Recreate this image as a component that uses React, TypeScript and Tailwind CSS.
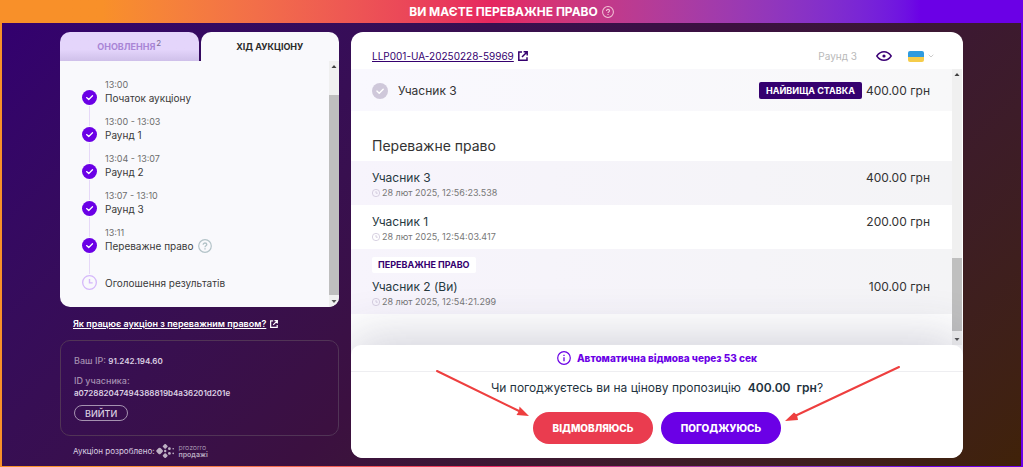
type Step = { time?: string; label: string; done: boolean; help?: boolean };
type Bid = { name: string; date: string; amount: string; own?: boolean };

const steps: Step[] = [
  { time: "13:00", label: "Початок аукціону", done: true },
  { time: "13:00 - 13:03", label: "Раунд 1", done: true },
  { time: "13:04 - 13:07", label: "Раунд 2", done: true },
  { time: "13:07 - 13:10", label: "Раунд 3", done: true },
  { time: "13:11", label: "Переважне право", done: true, help: true },
  { label: "Оголошення результатів", done: false },
];

const bids: Bid[] = [
  { name: "Учасник 3", date: "28 лют 2025, 12:56:23.538", amount: "400.00 грн" },
  { name: "Учасник 1", date: "28 лют 2025, 12:54:03.417", amount: "200.00 грн" },
  { name: "Учасник 2 (Ви)", date: "28 лют 2025, 12:54:21.299", amount: "100.00 грн", own: true },
];

const Check = ({ className }: { className: string }) => (
  <svg viewBox="0 0 16 16" className={className} aria-hidden="true">
    <circle cx="8" cy="8" r="8" fill="currentColor" />
    <path d="M4.9 8.1l2.3 2.1 4-4" fill="none" stroke="#fff" strokeWidth="1.4" strokeLinecap="round" strokeLinejoin="round" />
  </svg>
);

const Clock = ({ className }: { className: string }) => (
  <svg viewBox="0 0 16 16" className={className} fill="none" stroke="currentColor" aria-hidden="true">
    <circle cx="8" cy="8" r="7.3" strokeWidth="1.4" />
    <path d="M8 4.2v4.2h3.4" strokeWidth="1.5" />
  </svg>
);

const Help = ({ className }: { className: string }) => (
  <svg viewBox="0 0 14 14" className={className} fill="none" stroke="currentColor" aria-hidden="true">
    <circle cx="7" cy="7" r="6.3" strokeWidth="1.2" />
    <path d="M5.2 5.7c0-1 .8-1.7 1.8-1.7s1.8.7 1.8 1.6c0 1.2-1.8 1.3-1.8 2.6" strokeWidth="1.3" />
    <path d="M7 9.2v1.2" strokeWidth="1.4" />
  </svg>
);

const External = ({ className }: { className: string }) => (
  <svg viewBox="0 0 10 10" className={className} fill="none" stroke="currentColor" aria-hidden="true">
    <path d="M4 1H.8v8.2H9V6.2" strokeWidth="1.5" />
    <path d="M5.6.8h3.6v3.6M9 1L4 6" strokeWidth="1.5" />
  </svg>
);

const Scrollbar = ({ thumb }: { thumb: string }) => (
  <div className="flex w-[10px] shrink-0 flex-col items-center bg-[#f0f0f0]" aria-hidden="true">
    <svg viewBox="0 0 10 10" className="size-[10px] shrink-0">
      <path d="M5 4l2.5 3h-5z" fill="#404040" />
    </svg>
    <div className={`w-full bg-[#bfbfbf] ${thumb}`} />
    <svg viewBox="0 0 10 12" className="h-3 w-[10px] shrink-0">
      <path d="M5 8l2.5-3h-5z" fill="#555" />
    </svg>
  </div>
);

const Logo = () => (
  <svg viewBox="0 0 20 14" className="h-[14px] w-5" fill="#beb0c4" aria-hidden="true">
    <rect x=".9" y="4.3" width="5.4" height="5.4" rx="1.3" transform="rotate(45 3.6 7)" />
    <rect x="7.2" y=".4" width="4" height="4" rx="1" transform="rotate(45 9.2 2.4)" />
    <rect x="7.2" y="9.6" width="4" height="4" rx="1" transform="rotate(45 9.2 11.6)" />
    <circle cx="9.2" cy="7" r="1.2" />
    <circle cx="13.4" cy="4.7" r="1.4" />
    <circle cx="13.4" cy="9.4" r="1.4" />
    <circle cx="17.2" cy="4.7" r=".8" />
    <circle cx="17.2" cy="9.4" r=".8" />
  </svg>
);

const Sidebar = () => (
  <aside className="flex w-[279px] shrink-0 flex-col">
    <div className="flex gap-[2px]" role="tablist">
      <button
        role="tab"
        aria-selected="false"
        className="flex h-[29px] flex-1 items-center justify-center gap-px rounded-t-[10px] bg-linear-to-b from-[#e4d5fb] from-60% to-[#cfc0ea] text-[9px] font-bold text-[#a985d6]"
      >
        ОНОВЛЕННЯ
        <span className="pb-2 text-[8px] leading-[10px] font-normal text-[#7d6b98]">2</span>
      </button>
      <button
        role="tab"
        aria-selected="true"
        className="h-[29px] flex-1 rounded-t-[10px] bg-[#f9f9fc] text-[9px] font-bold text-[#2b2b2b]"
      >
        ХІД АУКЦІОНУ
      </button>
    </div>
    <div className="flex h-[246px] overflow-hidden rounded-b-[10px] bg-[#f9f9fc]">
      <ol className="flex-1 pt-[17px] pl-[22px]">
        {steps.map((step, i) => (
          <li key={step.label} className="flex h-[37px] gap-2">
            <div className="flex w-[15px] flex-col items-center pt-3">
              {step.done ? (
                <Check className="size-[15px] shrink-0 text-[#6b00e6]" />
              ) : (
                <Clock className="size-[15px] shrink-0 text-[#d5b8fa]" />
              )}
              {i < steps.length - 1 && <div className="mt-px -mb-[11px] w-px flex-1 bg-[#e6d8f8]" />}
            </div>
            <div>
              <div className="h-[13px] text-[9px] leading-[13px] text-[#6d6d6d]">{step.time}</div>
              <div className="flex h-[14px] items-center gap-1 text-[10px] leading-[14px] whitespace-nowrap text-[#3a3a3a]">
                {step.label}
                {step.help && <Help className="size-[14px] text-[#b3c3c8]" />}
              </div>
            </div>
          </li>
        ))}
      </ol>
      <Scrollbar thumb="mt-6 flex-1" />
    </div>
    <div className="flex h-[33px] items-center pl-[13px] text-[9px] font-semibold text-white">
      <a href="#how" className="flex items-center gap-1">
        <span className="underline">Як працює аукціон з переважним правом?</span>
        <External className="size-2" />
      </a>
    </div>
    <section className="h-[96px] rounded-[10px] border border-[#513456] px-[13px] pt-[13px] text-[9px] leading-[13px] font-medium text-[#dccfe2]">
      <p>
        <span className="text-[#a48eb0]">Ваш IP:</span> <span className="text-[8px] font-semibold">91.242.194.60</span>
      </p>
      <p className="mt-[6px] text-[#a48eb0]">ID учасника:</p>
      <p className="text-[8px] font-semibold">a072882047494388819b4a36201d201e</p>
      <button className="mt-[5px] h-4 rounded-full border border-[#a592b0] px-[10px] text-[9px] leading-[13px] font-medium">
        ВИЙТИ
      </button>
    </section>
    <div className="mt-2 flex items-center pl-[13px] text-[8px] text-[#dccfe2]">
      Аукціон розроблено:
      <div className="ml-[2px] flex items-center gap-[2px]">
        <Logo />
        <div className="text-[7px] leading-[7px] text-[#b9a9c0]">
          <div className="h-[7px] font-light">prozorro</div>
          <div className="h-[7px] font-semibold">продажі</div>
        </div>
      </div>
    </div>
  </aside>
);

const CardHeader = () => (
  <header className="flex h-[37px] items-center pt-[11px] pr-[29px] pl-[21px]">
    <a href="#auction" className="flex items-center gap-1 text-[10px] text-[#35006f]">
      <span className="underline">LLP001-UA-20250228-59969</span>
      <External className="size-[10px]" />
    </a>
    <span className="mr-[19px] ml-auto text-[10px] text-[#b9b9b9]">Раунд 3</span>
    <button aria-label="Контрастність" className="mr-4">
      <svg viewBox="0 0 16 10" className="h-[10px] w-4" fill="none" stroke="#3b0075" strokeWidth="1.4">
        <path d="M.8 5C2.7 2.2 5.2.8 8 .8S13.3 2.2 15.2 5C13.3 7.8 10.8 9.2 8 9.2S2.7 7.8.8 5z" />
        <circle cx="8" cy="5" r="1.6" fill="#3b0075" stroke="none" />
      </svg>
    </button>
    <button aria-label="Мова" className="flex items-center gap-1">
      <span className="h-[11px] w-4 overflow-hidden rounded-[2px] bg-linear-to-b from-[#2f9bdf] from-50% to-[#f5cc4a] to-50%" />
      <svg viewBox="0 0 6 4" className="h-1 w-[6px]" fill="none" stroke="#ccc">
        <path d="M.7.7L3 3 5.3.7" />
      </svg>
    </button>
  </header>
);

const BidList = () => (
  <div className="flex h-[276px]">
    <div className="flex-1 text-[12px]">
      <div className="flex h-[42px] items-center bg-linear-to-r from-[#f9f8fe] to-[#f8f8f9] pt-px pr-[22px] pl-[21px] text-[#333]">
        <Check className="mr-[10px] size-4 text-[#cfc8da]" />
        Учасник 3
        <span className="mr-1 ml-auto rounded-[2px] bg-[#35006f] px-[7px] text-[9px] leading-[17px] font-bold text-white">
          НАЙВИЩА СТАВКА
        </span>
        400.00 грн
      </div>
      <h2 className="flex h-[50px] items-end pb-[5px] pl-[21px] text-[14px] text-[#333]">Переважне право</h2>
      {bids.map((bid) => (
        <div
          key={bid.name}
          className="flex items-end bg-linear-to-r pr-[22px] pb-[6px] pl-[21px] nth-[odd]:from-[#f7f4fc] nth-[odd]:to-[#f4f4f6]"
        >
          <div className="pt-2">
            {bid.own && (
              <span className="mb-[5px] block w-fit rounded-[2px] bg-white px-[6px] text-[9px] leading-4 font-bold text-[#35006f]">
                ПЕРЕВАЖНЕ ПРАВО
              </span>
            )}
            <div className="leading-[17px] text-[#27393f]">{bid.name}</div>
            <div className="flex items-center gap-[2px] text-[9px] leading-[13px] text-[#777]">
              <Clock className="size-2 text-[#c9c0d6]" />
              {bid.date}
            </div>
          </div>
          <div className="ml-auto pb-[13px] leading-[17px] text-[#333]">{bid.amount}</div>
        </div>
      ))}
    </div>
    <Scrollbar thumb="mt-auto mb-[2px] h-[73px]" />
    <div className="w-px" />
  </div>
);

const Decision = () => (
  <footer className="relative flex-1 rounded-[10px] bg-white shadow-[0_-6px_50px_rgba(50,50,90,0.24)]">
    <div className="flex h-[27px] items-center justify-center gap-[6px] border-b border-[#eeeef1] text-[10px] font-extrabold text-[#6b00e6]">
      <svg viewBox="0 0 14 14" className="size-[14px]" fill="none" stroke="currentColor" aria-hidden="true">
        <circle cx="7" cy="7" r="6.3" strokeWidth="1.2" />
        <path d="M7 6.2v4.1M7 3.7v1.3" strokeWidth="1.3" />
      </svg>
      Автоматична відмова через 53 сек
    </div>
    <p className="pt-[7px] text-center text-[12px] leading-[17px] text-[#1f3340]">
      Чи погоджуєтесь ви на цінову пропозицію&nbsp; <b className="font-semibold">400.00 &nbsp;грн</b>?
    </p>
    <div className="mt-4 flex justify-center gap-2 text-[10px] font-extrabold text-white">
      <button className="h-8 w-[120px] rounded-full bg-[#ea3c4f]">ВІДМОВЛЯЮСЬ</button>
      <button className="h-8 w-[120px] rounded-full bg-[#6b00e6]">ПОГОДЖУЮСЬ</button>
    </div>
    <svg
      viewBox="0 0 612 112"
      className="pointer-events-none absolute top-0 left-1/2 h-[112px] w-[612px] -translate-x-1/2"
      fill="#ee3f3f"
      stroke="#ee3f3f"
      aria-hidden="true"
    >
      <path d="M86 26L168 66M548 22L446 70" strokeWidth="2" strokeLinecap="round" />
      <path d="M178 71L165.5 70 168 66 168.5 61.5zM434 76L443 67.5 446 70 447 75z" stroke="none" />
    </svg>
  </footer>
);

const App = () => (
  <div className="flex min-h-screen flex-col bg-linear-to-r from-[#f89029] from-10% via-[#e6265f] via-48% to-[#6b00e6] to-90% px-[2px] pb-[2px] font-[Inter,'Liberation_Sans',sans-serif]">
    <div className="flex h-[23px] items-center justify-center gap-1 text-[12px] font-bold text-white">
      ВИ МАЄТЕ ПЕРЕВАЖНЕ ПРАВО
      <Help className="size-3 text-[#f3c4d6]" />
    </div>
    <main className="flex flex-1 gap-3 bg-linear-135 from-[#33006f] via-[#3b1040] via-50% to-[#402208] px-[58px] pt-[9px] pb-2">
      <Sidebar />
      <div className="flex min-w-0 flex-1 flex-col overflow-hidden rounded-[12px] bg-white">
        <CardHeader />
        <BidList />
        <Decision />
      </div>
    </main>
  </div>
);

export default App;
